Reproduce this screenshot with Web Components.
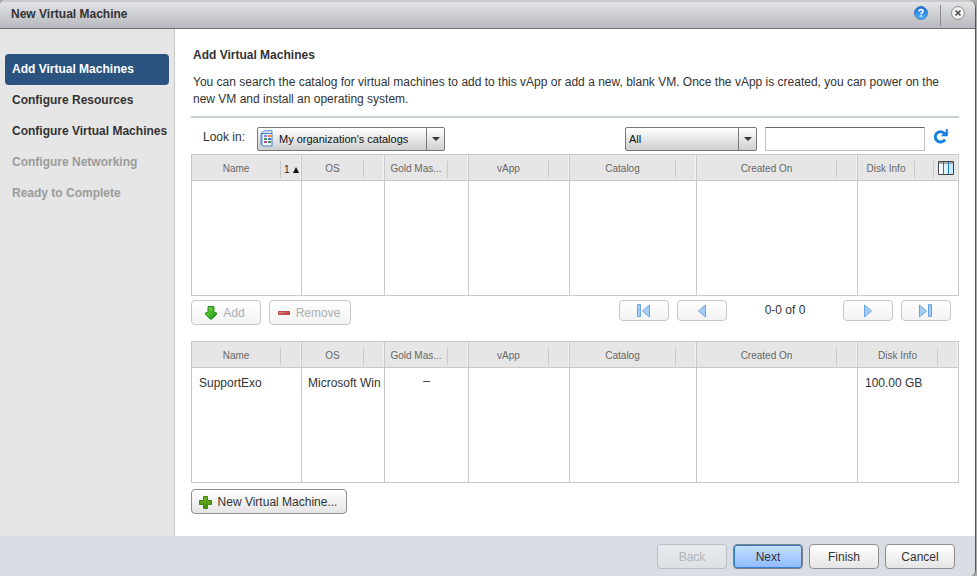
<!DOCTYPE html>
<html lang="en">
<head>
<meta charset="utf-8">
<title>New Virtual Machine</title>
<style>
html, body { height: 100%; }
body { margin: 0; background: #a9a9a9; color: #333; font: 12px/17px "Liberation Sans", Arial, sans-serif; }
</style>
</head>
<body>
<vm-wizard></vm-wizard>
<script>
const icons = {
  add: `<svg width="12" height="14" viewBox="0 0 12 14"><defs><linearGradient id="g" x2="1" y2="1"><stop stop-color="#8be04a"/><stop offset="1" stop-color="#0a8f0a"/></linearGradient></defs><path d="M3 .6h6v6.2h2.4v1.6L6.6 13.2H5.4L.6 8.400V6.800H3z" fill="url(#g)" stroke="#1f8a1f"/></svg>`,
  remove: `<svg width="12" height="4" viewBox="0 0 12 4"><defs><linearGradient id="g" x2="1" y2="1"><stop stop-color="#e9a0a0"/><stop offset="1" stop-color="#b52020"/></linearGradient></defs><path d="M.5.5h11v3H.5z" fill="url(#g)" stroke="#b84a4a"/></svg>`,
  plus: `<svg width="13" height="13" viewBox="0 0 13 13"><defs><linearGradient id="g" x2="0" y2="1"><stop stop-color="#6fb52c"/><stop offset="1" stop-color="#418a00"/></linearGradient></defs><path d="M4.500 .5h4v4h4v4h-4v4h-4v-4h-4v-4h4z" fill="url(#g)" stroke="#3f8410" stroke-linejoin="round"/></svg>`,
  first: `<svg width="14" height="14" viewBox="0 0 14 14" fill="#a3cdf5" stroke="#6aa5e3"><path d="M.5 .5h3v12h-3zM12.500 1v12L5.500 7z"/></svg>`,
  prev: `<svg width="14" height="14" viewBox="0 0 14 14" fill="#a3cdf5" stroke="#6aa5e3"><path d="M10.500 1v12L3.500 7z"/></svg>`,
  next: `<svg width="14" height="14" viewBox="0 0 14 14" fill="#a3cdf5" stroke="#6aa5e3"><path d="M3.500 1v12L10.500 7z"/></svg>`,
  last: `<svg width="14" height="14" viewBox="0 0 14 14" fill="#a3cdf5" stroke="#6aa5e3"><path d="M.5 1v12L7.500 7zM9.500 .5h3v12h-3z"/></svg>`,
  refresh: `<svg width="15" height="16" viewBox="0 0 15 16"><path d="M11.500 5.500A5.200 5.200 0 1 0 12 11.500" fill="none" stroke="#1a7fe0" stroke-width="3"/><path d="M14.800 1v7.200H7.600L9.500 6.500 12.800 3.800V1z" fill="#1a7fe0"/></svg>`,
  catalog: `<svg width="13" height="17" viewBox="0 0 13 17"><path d="M1 3.500l3-2.500 8-.4v2.900z" fill="#d8ecfb" stroke="#5d8fc0"/><path d="M1 3.500h11v12.500H2.500L1 14.500z" fill="#eef6fe" stroke="#4b7fb8"/><path d="M1 4h1.500v11.500L1 14z" fill="#5b96d6"/><path d="M4 5h3v2H4z" fill="#7d86e8"/><path d="M8 5h3v2H8z" fill="#f08040"/><path d="M4 8h3v2H4z" fill="#4f9060"/><path d="M8 8h3v2H8z" fill="#4a6fc0"/><path d="M4 11h3v2H4z" fill="#a55070"/><path d="M8 11h3v2H8z" fill="#3f8a80"/></svg>`,
  columns: `<svg width="16" height="14" viewBox="0 0 16 14"><defs><linearGradient id="g" x2="1" y2="0"><stop stop-color="#fff"/><stop offset="1" stop-color="#bfe3fa"/></linearGradient></defs><path d="M.5.5h15v13H.5z" fill="url(#g)" stroke="#444"/><path d="M1 1h14v2H1z" fill="#aaa"/><path d="M5.500 1v12M10.500 1v12" stroke="#1479cf"/></svg>`,
  help: `<svg width="14" height="14" viewBox="0 0 14 14"><defs><linearGradient id="g" x2="0" y2="1"><stop stop-color="#1766cf"/><stop offset="1" stop-color="#58bdff"/></linearGradient></defs><circle cx="7" cy="7" r="6.400" fill="url(#g)" stroke="#3474bd"/><path d="M4.900 5.400Q5 3.600 7 3.600T9.100 5.300Q9 6.500 7.200 7.200V8.300M7.200 9.300V10.800" fill="none" stroke="#fff" stroke-width="1.600"/></svg>`,
  close: `<svg width="14" height="14" viewBox="0 0 14 14"><circle cx="7" cy="7" r="6.400" fill="#f3f3f3" stroke="#8b8b8b"/><path d="M4.500 4.500l5 5M9.500 4.500l-5 5" stroke="#505050" stroke-width="1.700"/></svg>`
};

class BaseElement extends HTMLElement {
  connectedCallback() {
    if (this.shadowRoot) return;
    this.attachShadow({ mode: 'open' }).innerHTML =
      `<style>*{box-sizing:border-box} button,input,select{font:inherit;color:inherit;margin:0} svg{display:block;flex:none}</style>` + this.render();
  }
}

customElements.define('vm-icon', class extends BaseElement {
  render() { return `<style>:host{display:inline-flex;flex:none}</style>${icons[this.getAttribute('name')]}`; }
});

customElements.define('vm-button', class extends BaseElement {
  render() {
    const label = this.getAttribute('label');
    return `<style>
      :host { display: block; }
      button { display: flex; align-items: center; justify-content: center; gap: 6px; width: 100%; min-width: 70px; height: 25px; padding: 1px 8px 0 6px;
        border: 1px solid #8f8f8f; border-radius: 4px; background: linear-gradient(#fff, #e5e5e5); white-space: nowrap; }
      button:disabled { color: #a9b0b3; border-color: #c8c8c8; background: linear-gradient(#fff, #f3f3f3); }
      :host([kind=footer]) button, :host([kind=primary]) button { padding: 2px 6px 0; }
      :host([kind=footer]) button:disabled { color: #b0b5b8; border-color: #b9bfc4; background: linear-gradient(#e7ebee, #dde1e5); }
      :host([kind=primary]) button { border-color: #7b7f88; box-shadow: inset 0 0 0 1px #3680d0; background: linear-gradient(#c3e1ff, #8fbaff); }
      :host([kind=page]) button { min-width: 50px; height: 21px; padding: 0; border-color: #c8c8c8; background: linear-gradient(#fff, #f3f3f3); }
    </style>
    <button type="button" ${this.hasAttribute('off') ? 'disabled' : ''} ${label ? `aria-label="${label}"` : ''}><slot></slot></button>`;
  }
});

customElements.define('vm-select', class extends BaseElement {
  render() {
    const quiet = this.hasAttribute('quiet');
    const label = this.getAttribute('label');
    return `<style>
      :host { display: flex; align-items: center; }
      label { width: 54px; padding-bottom: 3px; }
      .box { display: grid; grid-template-columns: 1fr 18px; align-items: center; height: 24px; font-size: 11px;
        border: 1px solid #777; border-radius: 2px; background: linear-gradient(#fff, #cfcfcf); color: #111; }
      .box > * { grid-row: 1; }
      select { grid-column: 1 / 3; width: 100%; height: 22px; appearance: none; border: 0; background: none; padding: 1px 20px 0 3px; }
      vm-icon { grid-column: 1; justify-self: start; padding-left: 2px; pointer-events: none; }
      vm-icon + select { padding-left: 21px; }
      .arrow { grid-column: 2; height: 22px; border-left: 1px solid #777; display: grid; place-items: center; pointer-events: none; }
      .arrow::before { content: ""; border: 4px solid transparent; border-top: 4px solid #333; border-bottom: 0; }
    </style>
    ${quiet ? '' : `<label for="s">${label}</label>`}
    <span class="box" style="width:${this.getAttribute('size')}px">
      ${this.hasAttribute('icon') ? `<vm-icon name="${this.getAttribute('icon')}"></vm-icon>` : ''}
      <select id="s" ${quiet ? `aria-label="${label}"` : ''}><option>${this.getAttribute('value')}</option></select><span class="arrow"></span>
    </span>`;
  }
});

customElements.define('vm-grid', class extends BaseElement {
  render() {
    const cols = [['Name', 110], ['OS', 83], ['Gold Mas...', 84], ['vApp', 101], ['Catalog', 127], ['Created On', 161], ['Disk Info', 102]];
    const sorted = this.hasAttribute('sorted');
    const row = (this.getAttribute('row') || '||||||').split('|');
    return `<style>
      :host { display: block; }
      table { width: 100%; table-layout: fixed; border-collapse: separate; border-spacing: 0; }
      th, td { padding: 0; border: solid #c9c9c9; border-width: 0 0 0 1px; }
      th:last-child, td:last-child { border-right-width: 1px; }
      th { height: 27px; border-top-width: 1px; border-bottom-width: 1px; background: #e6e6e6; font-weight: normal; font-size: 10px; color: #666; box-shadow: inset -1px 0 #f3f3f3; }
      th div { display: flex; height: 25px; }
      th span { flex: 1; line-height: 28px; text-align: center; white-space: nowrap; }
      i { flex: none; width: 21px; height: 17px; margin-top: 6px; border-left: 1px solid #c9c9c9; font-style: normal; color: #123; line-height: 17px; white-space: nowrap; }
      i b { display: flex; align-items: center; gap: 3px; padding-left: 3px; font-weight: normal; }
      i b::after { content: ""; border: 3px solid transparent; border-bottom: 6px solid #111; border-top: 0; }
      i.tools { width: 25px; padding-left: 4px; }
      i.tools button { display: block; margin: 0; padding: 0; border: 0; background: none; }
      i.narrow { width: 19px; }
      td { height: 115px; border-bottom-width: 1px; padding: 7px 3px 0 7px; vertical-align: top; white-space: nowrap; overflow: hidden; }
      td:nth-child(2) { padding-left: 6px; }
      td:nth-child(3) { text-align: center; padding: 5px 0 0; }
    </style>
    <table><colgroup>${cols.map(c => `<col style="width:${c[1]}px">`).join('')}</colgroup>
    <thead><tr>${cols.map(([name], n) => `<th scope="col"${sorted && n === 0 ? ' aria-sort="ascending"' : ''}><div><span>${name}</span>${
      sorted && n === 0 ? '<i><b>1</b></i>' :
      sorted && n === 6 ? '<i class="narrow"></i><i class="tools"><button type="button" aria-label="Choose columns"><vm-icon name="columns"></vm-icon></button></i>' : '<i></i>'}</div></th>`).join('')}</tr></thead>
    <tbody><tr>${row.map(t => `<td>${t}</td>`).join('')}</tr></tbody></table>`;
  }
});

customElements.define('vm-steps', class extends BaseElement {
  render() {
    const steps = [['Add Virtual Machines', 'on'], ['Configure Resources', ''], ['Configure Virtual Machines', ''], ['Configure Networking', 'off'], ['Ready to Complete', 'off']];
    return `<style>
      :host { display: block; background: #e6e6e6; border-right: 1px solid #c9c9c9; padding: 25px 5px; }
      ol { list-style: none; margin: 0; padding: 0; font-weight: bold; }
      button { display: block; width: 100%; height: 31px; padding: 0 0 0 7px; border: 0; border-radius: 4px; background: none; text-align: left; white-space: nowrap; }
      .on { background: #2a547f; color: #fff; }
      button:disabled { color: #9b9b9b; }
    </style><nav><ol>${steps.map(([t, s]) => `<li><button type="button" class="${s}" ${s === 'off' ? 'disabled' : ''}>${t}</button></li>`).join('')}</ol></nav>`;
  }
});

customElements.define('vm-wizard', class extends BaseElement {
  render() {
    return `<style>
      :host { display: flex; flex-direction: column; min-height: 100%; margin-right: 1px; background: #fff; border-right: 1px solid #555; border-radius: 6px 8px 6px 0; overflow: hidden; box-sizing: border-box; }
      header { display: flex; align-items: center; height: 29px; padding: 0 10px 0 11px; border-top: 2px solid #cbcbcd; border-bottom: 1px solid #6d6e73; background: linear-gradient(#e2e3e5, #b8b9be); }
      h1 { flex: 1; margin: 0; font-size: 12px; line-height: 17px; padding-bottom: 2px; }
      header button { display: block; border: 0; background: none; padding: 0; }
      .divider { width: 1px; height: 21px; margin: 0 10px 0 12px; background: #8c8c90; }
      .middle { flex: 1; display: grid; grid-template-columns: 175px minmax(0, 1fr); }
      main { padding: 18px 16px 20px; }
      h2 { margin: 0 2px 10px; font-size: 12px; line-height: 17px; }
      p { margin: 0 2px; }
      .bar { display: flex; align-items: center; margin-top: 8px; padding: 9px 10px 4px 12px; border-top: 2px solid #c9d1cf; height: 38px; }
      .grow { flex: 1; }
      .bar input { width: 160px; height: 24px; margin: 0 8px; padding: 0 4px; border: 1px solid #c0c0c0; border-top-color: #666; background: #fff; }
      .bar button { display: block; border: 0; padding: 0 1px 0 0; background: none; }
      .actions { display: flex; align-items: flex-start; gap: 8px; padding: 4px 8px 16px 0; }
      .remove { width: 82px; }
      output { width: 100px; text-align: center; line-height: 20px; }
      .new { width: 156px; margin-top: 6px; }
      footer { display: flex; justify-content: flex-end; gap: 6px; height: 40px; padding: 8px 20px 0; background: #d9dee5; }
    </style>
    <header><h1>New Virtual Machine</h1>
      <button type="button" aria-label="Help"><vm-icon name="help"></vm-icon></button><span class="divider"></span>
      <button type="button" aria-label="Close"><vm-icon name="close"></vm-icon></button></header>
    <div class="middle"><vm-steps></vm-steps>
      <main>
        <h2>Add Virtual Machines</h2>
        <p>You can search the catalog for virtual machines to add to this vApp or add a new, blank VM. Once the vApp is created, you can power on the new VM and install an operating system.</p>
        <div class="bar">
          <vm-select label="Look in:" value="My organization's catalogs" icon="catalog" size="188"></vm-select>
          <span class="grow"></span>
          <vm-select label="Filter by" quiet value="All" size="132"></vm-select>
          <input type="text" aria-label="Search">
          <button type="button" aria-label="Refresh"><vm-icon name="refresh"></vm-icon></button>
        </div>
        <vm-grid sorted></vm-grid>
        <div class="actions">
          <vm-button off><vm-icon name="add"></vm-icon>Add</vm-button>
          <vm-button class="remove" off><vm-icon name="remove"></vm-icon>Remove</vm-button>
          <span class="grow"></span>
          <vm-button kind="page" label="First page"><vm-icon name="first"></vm-icon></vm-button>
          <vm-button kind="page" label="Previous page"><vm-icon name="prev"></vm-icon></vm-button>
          <output>0-0 of 0</output>
          <vm-button kind="page" label="Next page"><vm-icon name="next"></vm-icon></vm-button>
          <vm-button kind="page" label="Last page"><vm-icon name="last"></vm-icon></vm-button>
        </div>
        <vm-grid row="SupportExo|Microsoft Win|–||||100.00 GB"></vm-grid>
        <vm-button class="new"><vm-icon name="plus"></vm-icon>New Virtual Machine...</vm-button>
      </main></div>
    <footer>
      <vm-button kind="footer" off>Back</vm-button>
      <vm-button kind="primary">Next</vm-button>
      <vm-button kind="footer">Finish</vm-button>
      <vm-button kind="footer">Cancel</vm-button>
    </footer>`;
  }
});
</script>
</body>
</html>
